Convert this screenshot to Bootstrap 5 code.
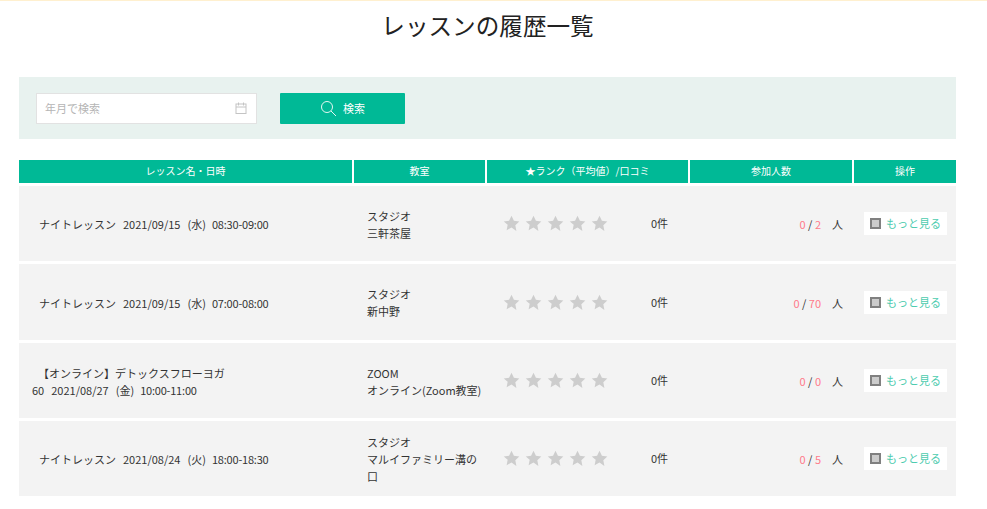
<!DOCTYPE html>
<html lang="ja">
<head>
    <meta charset="UTF-8">
    <meta name="viewport" content="width=device-width, initial-scale=1.0">
    <title>レッスンの履歴一覧</title>
    <link href="https://cdn.jsdelivr.net/npm/bootstrap@5.3.0/dist/css/bootstrap.min.css" rel="stylesheet">
    <style>
        body {
            font-family: "Noto Sans CJK JP", "Noto Sans", sans-serif;
            font-size: 11px;
            color: #333;
            background: #fff;
            border-top: 1px solid #fff0cf;
        }
        .page-wrap { padding: 0 31px 0 19px; }
        .page-title {
            font-size: 23.6px;
            font-weight: 400;
            color: #222;
            line-height: 36px;
            text-align: center;
            margin: 6px 0 34px;
        }
        .search-panel {
            background: #e8f2ef;
            height: 62px;
            padding: 16px 17px;
            gap: 23px;
            margin-bottom: 21px;
        }
        .date-box {
            width: 221px;
            height: 31px;
            background: #fff;
            border: 1px solid #e2e2e2;
            padding: 0 9px 0 8px;
            color: #b5b5b5;
        }
        .search-btn {
            width: 125px;
            height: 31px;
            padding: 0;
            gap: 6px;
            background: #00b996;
            border: 0;
            border-radius: 1px;
            color: #fff;
            font-size: 11px;
        }
        .lesson-table {
            width: 937px;
            table-layout: fixed;
            border-collapse: separate;
            border-spacing: 0;
        }
        .lesson-table th {
            height: 26px;
            padding: 0 0 2px;
            background: #00b996;
            background-clip: padding-box;
            border-right: 2px solid #fff;
            border-bottom: 3px solid #fff;
            color: #fff;
            font-size: 10px;
            font-weight: 400;
            text-align: center;
        }
        .lesson-table th:last-child { border-right: 0; }
        .lesson-table td {
            height: 78px;
            padding: 0;
            background: #f3f3f3;
            background-clip: padding-box;
            border-bottom: 3px solid #fff;
            line-height: 17px;
            vertical-align: middle;
        }
        .lesson-table tbody tr:nth-child(2) td { height: 79px; }
        .lesson-table .lesson-name { padding: 2px 0 0 20px; }
        .lesson-table .lesson-name-wrap { padding: 2px 0 0 13px; }
        .lesson-title { padding-left: 6px; }
        .name-part { margin-right: 7px; }
        .time-part { letter-spacing: -.2px; margin-left: -1px; }
        .lesson-table .room-cell { padding: 2px 0 0 13px; }
        .stars-wrap { padding-left: 16px; gap: 5px; }
        .count-text { margin-left: 38px; }
        .lesson-table .member-cell { padding: 2px 11px 0 0; text-align: right; }
        .member-num { color: #ff7a8a; }
        .member-unit { margin-left: 11px; }
        .more-link {
            width: 83px;
            height: 23px;
            margin-left: 10px;
            gap: 5px;
            background: #fff;
            color: #4ccbae;
            text-decoration: none;
        }
        .doc-square {
            width: 11px;
            height: 11px;
            background: #ccc;
            border: 2px solid #808080;
        }
    </style>
</head>
<body>
    <div class="page-wrap">
        <h1 class="page-title">レッスンの履歴一覧</h1>

        <form class="search-panel d-flex align-items-center">
            <div class="date-box d-flex align-items-center justify-content-between">
                <span>年月で検索</span>
                <svg width="12" height="12" viewBox="0 0 12 12" fill="none" stroke="#c4c4c4" stroke-width="1">
                    <rect x="1" y="2" width="10" height="9.5"/>
                    <path d="M1 5h10M3.5 .5v3M8.5 .5v3"/>
                </svg>
            </div>
            <button type="button" class="search-btn d-flex align-items-center justify-content-center">
                <svg width="17" height="17" viewBox="0 0 17 17" fill="none" stroke="#e4f7f2" stroke-width="1">
                    <circle cx="7" cy="7" r="5.5"/>
                    <path d="M11 11l5 5"/>
                </svg>
                <span>検索</span>
            </button>
        </form>

        <table class="lesson-table">
            <colgroup>
                <col style="width:335px"><col style="width:133px"><col style="width:203px"><col style="width:164px"><col style="width:102px">
            </colgroup>
            <thead>
                <tr>
                    <th>レッスン名・日時</th>
                    <th>教室</th>
                    <th>★ランク（平均値）/口コミ</th>
                    <th>参加人数</th>
                    <th>操作</th>
                </tr>
            </thead>
            <tbody id="lesson-rows"></tbody>
        </table>
    </div>

    <script src="https://cdn.jsdelivr.net/npm/bootstrap@5.3.0/dist/js/bootstrap.bundle.min.js"></script>
    <script>
        // lesson history rows
        const lessons = [
            { name: 'ナイトレッスン', date: '2021/09/15', day: '(水)', time: '08:30-09:00', room: 'スタジオ<br>三軒茶屋', total: 2 },
            { name: 'ナイトレッスン', date: '2021/09/15', day: '(水)', time: '07:00-08:00', room: 'スタジオ<br>新中野', total: 70 },
            { title: '【オンライン】デトックスフローヨガ', name: '60', date: '2021/08/27', day: '(金)', time: '10:00-11:00', room: 'ZOOM<br>オンライン(Zoom教室)', total: 0 },
            { name: 'ナイトレッスン', date: '2021/08/24', day: '(火)', time: '18:00-18:30', room: 'スタジオ<br>マルイファミリー溝の口', total: 5 },
        ];

        const star = '<svg width="17" height="17" viewBox="0 0 24 24" fill="#cdcdcd"><path d="M12 1l3.400 7.200 7.600 1-5.600 5.400 1.500 7.900L12 17.600l-6.900 3.900 1.500-7.900L1 9.200l7.600-1z"/></svg>';

        document.getElementById('lesson-rows').innerHTML = lessons.map(l => `
            <tr>
                <td class="${l.title ? 'lesson-name-wrap' : 'lesson-name'}">
                    <div class="d-inline-block">
                        ${l.title ? `<div class="lesson-title">${l.title}</div>` : ''}
                        <span class="name-part">${l.name}</span><span class="name-part">${l.date}</span><span class="name-part">${l.day}</span><span class="time-part">${l.time}</span>
                    </div>
                </td>
                <td class="room-cell">${l.room}</td>
                <td>
                    <div class="stars-wrap d-flex align-items-center">
                        ${star.repeat(5)}
                        <span class="count-text">0件</span>
                    </div>
                </td>
                <td class="member-cell"><span class="member-num">0</span> / <span class="member-num">${l.total}</span><span class="member-unit">人</span></td>
                <td>
                    <a href="#" class="more-link d-flex align-items-center justify-content-center">
                        <span class="doc-square"></span>もっと見る
                    </a>
                </td>
            </tr>`).join('');
    </script>
</body>
</html>
